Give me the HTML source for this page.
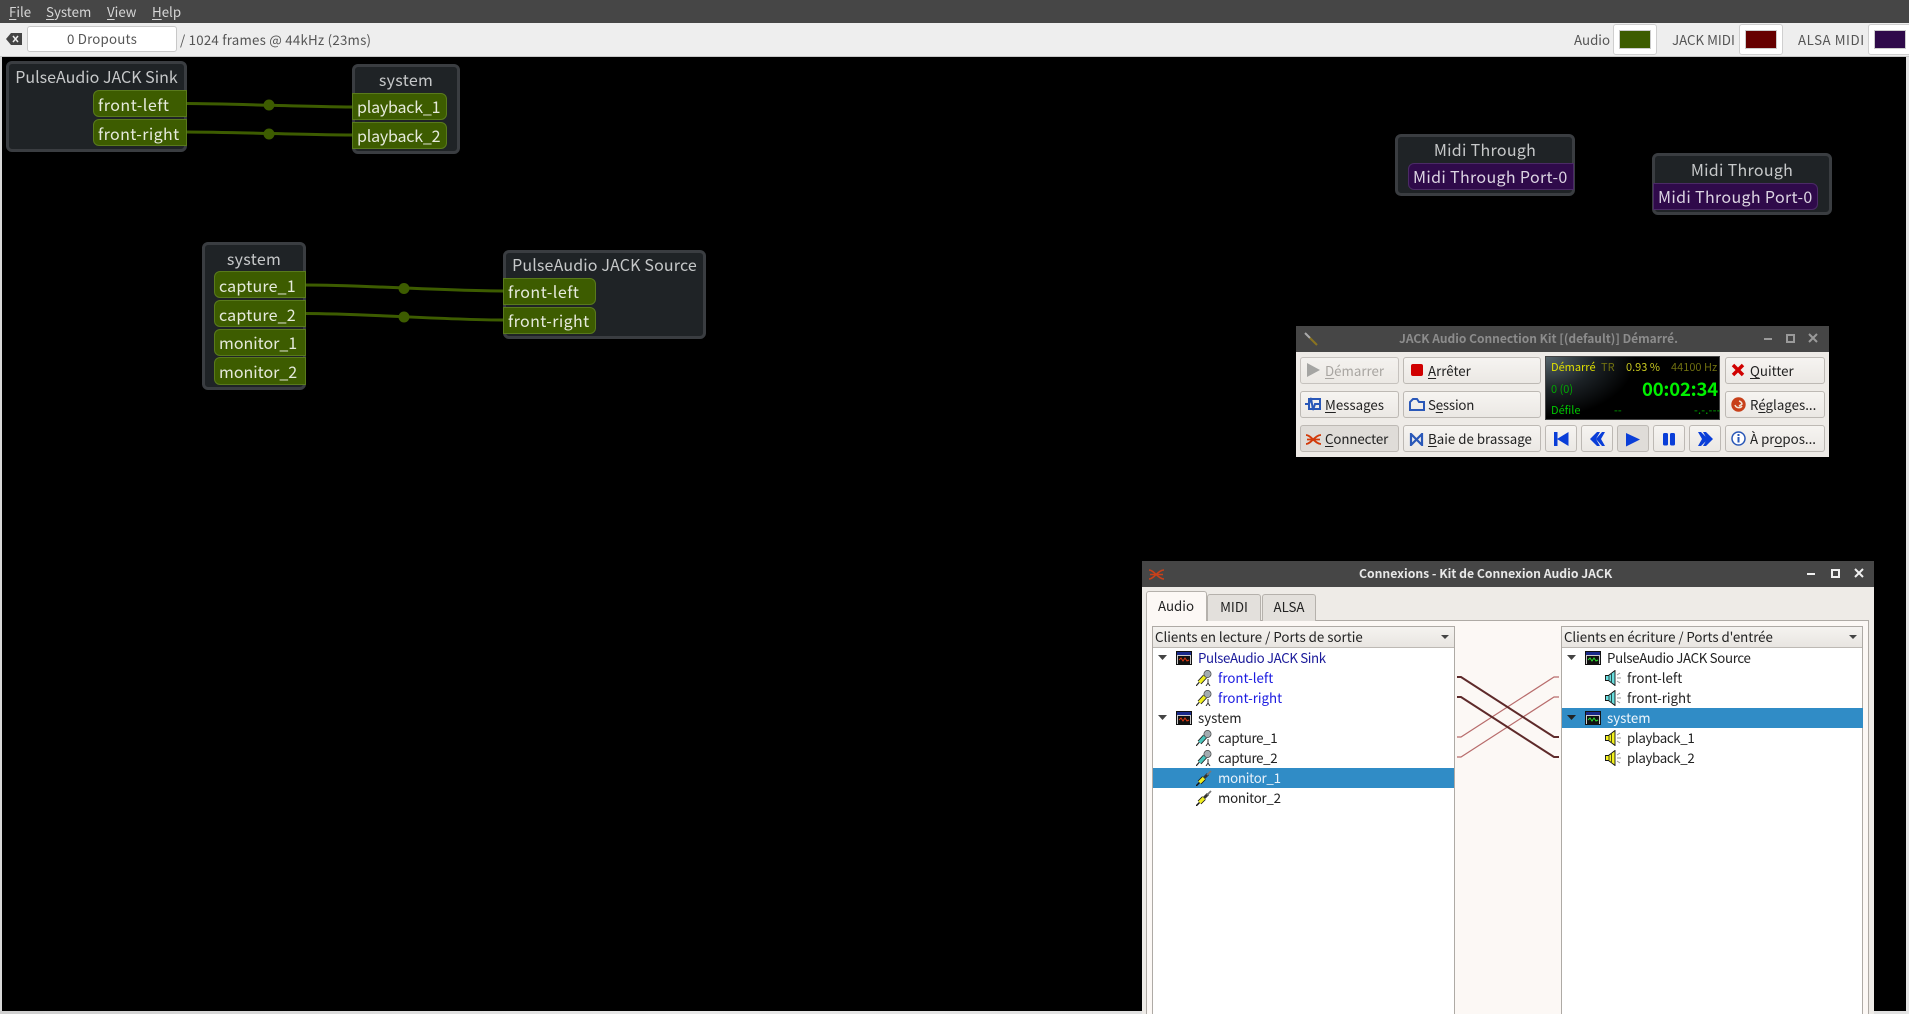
<!DOCTYPE html>
<html><head><meta charset="utf-8"><title>QJackCtl</title>
<style>
html,body{margin:0;padding:0;background:#000;width:1909px;height:1014px;overflow:hidden}
body{position:relative;font-family:"Noto Sans CJK JP","DejaVu Sans","Liberation Sans",sans-serif;font-size:13.3px;color:#222}
div,span.a,svg.a{position:absolute;box-sizing:border-box}
.t{position:absolute;white-space:pre;line-height:20px;height:20px}
.c{text-align:center}
u{text-decoration-thickness:1px;text-underline-offset:2px}
.node{background:#1f2326;border:3px solid #3a3d41;border-radius:6px}
.nt{position:absolute;white-space:pre;line-height:20px;height:20px;font-size:16px;color:#c6c8c9;text-align:center}
.port{background:#3d5c00;border:1px solid #597a1c;color:#e6eadc;font-size:16px;line-height:25px;white-space:pre;padding-left:4px}
.pl{border-radius:6px 0 0 6px}
.pr{border-radius:0 6px 6px 0}
.pp{background:#2f0a4a;border:1px solid #4b2a66;color:#dcd4e2;font-size:16px;line-height:25px;white-space:pre;padding-left:4px;letter-spacing:.35px}
.btn{background:linear-gradient(#f6f4f1,#ebe8e4);border:1px solid #bdb9b4;border-radius:3px}
.on{background:#dfdcd8}
.tb{background:#464646}
.sw{background:#fff;border:1px solid #cfcfcf;border-radius:3px}
.d{font-size:11px}
</style></head>
<body>
<svg width="0" height="0" style="position:absolute">
<defs>
<symbol id="gi" viewBox="0 0 16 14"><rect x=".5" y=".5" width="15" height="13" fill="#ccc" stroke="#111"/><rect x="1" y="1" width="14" height="3" fill="#1a2a8a"/><rect x="2" y="5" width="12" height="8" fill="#111"/><path d="M3 9l2-2 2 3 2-3 2 3 2-1" fill="none" stroke="#e03a10"/></symbol>
<symbol id="gg" viewBox="0 0 16 14"><rect x=".5" y=".5" width="15" height="13" fill="#ccc" stroke="#111"/><rect x="1" y="1" width="14" height="3" fill="#1a2a8a"/><rect x="2" y="5" width="12" height="8" fill="#111"/><path d="M3 9l2-2 2 3 2-3 2 3 2-1" fill="none" stroke="#2fe030"/></symbol>
<symbol id="my" viewBox="0 0 16 16"><path d="M0 16L3.500 12" stroke="#222" stroke-width="1.200"/><path d="M3.500 12.500L9 6.500" stroke="#222" stroke-width="5"/><path d="M3.500 12.500L9 6.500" stroke="#f0ee20" stroke-width="3.400"/><circle cx="11.500" cy="4" r="3.600" fill="#a2acb0" stroke="#444" stroke-width=".7"/><path d="M12 9v4m-2 3l2-3 2 3" stroke="#333" fill="none"/></symbol>
<symbol id="mc" viewBox="0 0 16 16"><path d="M0 16L3.500 12" stroke="#222" stroke-width="1.200"/><path d="M3.500 12.500L9 6.500" stroke="#222" stroke-width="5"/><path d="M3.500 12.500L9 6.500" stroke="#4ac4bc" stroke-width="3.400"/><circle cx="11.500" cy="4" r="3.600" fill="#a2acb0" stroke="#444" stroke-width=".7"/><path d="M12 9v4m-2 3l2-3 2 3" stroke="#333" fill="none"/></symbol>
<symbol id="jk" viewBox="0 0 16 16"><path d="M0 16l4-4" stroke="#111" stroke-width="1.500"/><path d="M3.500 12.500L8 8" stroke="#111" stroke-width="5"/><path d="M3.500 12.500L8 8" stroke="#f0ee20" stroke-width="3.400"/><path d="M8 8l4-4" stroke="#333" stroke-width="3"/><path d="M11 5l4-4" stroke="#777" stroke-width="1.800"/></symbol>
<symbol id="sc" viewBox="0 0 16 16"><path d="M.500 5.500h3L10 .500v15l-6.500-5h-3z" fill="#6adcdc" stroke="#111" stroke-width=".9"/><path d="M4 6v4M6.500 4v8" stroke="#111" stroke-width=".7"/><path d="M12 5l3-2m-3 5h4m-4 3l3 2" stroke="#999"/></symbol>
<symbol id="sy" viewBox="0 0 16 16"><path d="M.500 5.500h3L10 .500v15l-6.500-5h-3z" fill="#f2f020" stroke="#111" stroke-width=".9"/><path d="M4 6v4M6.500 4v8" stroke="#111" stroke-width=".7"/><path d="M12 5l3-2m-3 5h4m-4 3l3 2" stroke="#999"/></symbol>
</defs></svg>

<!-- left/bottom/right strips -->
<div style="left:0;top:0;width:2px;height:1014px;background:#d8d8d8"></div>
<div style="left:0;top:1011px;width:1142px;height:3px;background:linear-gradient(90deg,#cfcfcf,#e8e8e8 60%,#e0e0e0)"></div>
<div style="left:1874px;top:1011px;width:35px;height:3px;background:#e0e0e0"></div>
<div style="left:1906px;top:57px;width:3px;height:957px;background:#e4e4e4"></div>

<!-- menu bar -->
<div style="left:0;top:0;width:1909px;height:23px;background:#464646"></div>
<span class="t" style="left:9px;top:2px;color:#d6d6d6"><u>F</u>ile</span>
<span class="t" style="left:46px;top:2px;color:#d6d6d6"><u>S</u>ystem</span>
<span class="t" style="left:107px;top:2px;color:#d6d6d6"><u>V</u>iew</span>
<span class="t" style="left:152px;top:2px;color:#d6d6d6"><u>H</u>elp</span>

<!-- toolbar -->
<div style="left:0;top:23px;width:1909px;height:34px;background:#eeeeee;border-bottom:1px solid #c8c8c8"></div>
<svg class="a" style="left:6px;top:33px" width="16" height="12" viewBox="0 0 16 12"><path d="M0 6L5 0h11v12H5z" fill="#444"/><path d="M7 3l5 6m0-6l-5 6" stroke="#eee" stroke-width="1.500"/></svg>
<div style="left:27px;top:26px;width:150px;height:26px;background:#fff;border:1px solid #c8c8c8;border-radius:3px"></div>
<span class="t c" style="left:27px;width:150px;top:29px;color:#555;letter-spacing:.2px">0 Dropouts</span>
<span class="t" style="left:180px;top:30px;color:#555;letter-spacing:.22px">/ 1024 frames @ 44kHz (23ms)</span>
<span class="t" style="left:1574px;top:30px;color:#555">Audio</span>
<div class="sw" style="left:1613px;top:24px;width:44px;height:31px"></div>
<div style="left:1619px;top:30px;width:32px;height:19px;background:#3d5c00;border:1px solid #ccc"></div>
<span class="t" style="left:1672px;top:30px;color:#555">JACK MIDI</span>
<div class="sw" style="left:1739px;top:24px;width:44px;height:31px"></div>
<div style="left:1745px;top:30px;width:32px;height:19px;background:#660000;border:1px solid #ccc"></div>
<span class="t" style="left:1798px;top:30px;color:#555;letter-spacing:.55px">ALSA MIDI</span>
<div class="sw" style="left:1868px;top:24px;width:44px;height:31px"></div>
<div style="left:1874px;top:30px;width:32px;height:19px;background:#2f0a4a;border:1px solid #ccc"></div>

<!-- canvas wires -->
<svg class="a" style="left:0;top:0" width="1909" height="1014" fill="none">
<g stroke="#3d5c00" stroke-width="3">
<path d="M186 103.500C230 103.500 310 107 352 107"/><path d="M186 132C230 132 310 135 352 135"/>
<path d="M304 285C365 285 445 291 503 291"/><path d="M304 313.500C365 313.500 445 320 503 320"/>
</g>
<g fill="#3d5c00"><circle cx="269" cy="105" r="5.500"/><circle cx="269" cy="134" r="5.500"/><circle cx="404" cy="288.500" r="5.500"/><circle cx="404" cy="317" r="5.500"/></g>
</svg>

<!-- Sink -->
<div class="node" style="left:6px;top:61px;width:181px;height:91px"></div>
<span class="nt" style="left:6px;width:181px;top:66px">PulseAudio JACK Sink</span>
<div class="port pl" style="left:93px;top:90px;width:94px;height:27px;line-height:27px;letter-spacing:.5px">front-left</div>
<div class="port pl" style="left:93px;top:119px;width:94px;height:27px;line-height:27px;letter-spacing:.4px">front-right</div>
<!-- system playback -->
<div class="node" style="left:352px;top:64px;width:108px;height:90px"></div>
<span class="nt" style="left:352px;width:108px;top:69px;letter-spacing:.3px">system</span>
<div class="port pr" style="left:352px;top:93px;width:95px;height:27px;letter-spacing:-.2px">playback_1</div>
<div class="port pr" style="left:352px;top:122px;width:95px;height:27px;letter-spacing:-.2px">playback_2</div>
<!-- system capture -->
<div class="node" style="left:202px;top:242px;width:104px;height:148px"></div>
<span class="nt" style="left:202px;width:104px;top:248px;letter-spacing:.3px">system</span>
<div class="port pl" style="left:214px;top:271px;width:92px;height:27px;line-height:27px;letter-spacing:.2px">capture_1</div>
<div class="port pl" style="left:214px;top:300px;width:92px;height:27px;line-height:27px;letter-spacing:.2px">capture_2</div>
<div class="port pl" style="left:214px;top:329px;width:92px;height:27px">monitor_1</div>
<div class="port pl" style="left:214px;top:357px;width:92px;height:28px;line-height:27px">monitor_2</div>
<!-- Source -->
<div class="node" style="left:503px;top:250px;width:203px;height:89px"></div>
<span class="nt" style="left:503px;width:203px;top:254px;letter-spacing:.15px">PulseAudio JACK Source</span>
<div class="port pr" style="left:503px;top:278px;width:93px;height:27px;letter-spacing:.5px">front-left</div>
<div class="port pr" style="left:503px;top:307px;width:93px;height:27px;letter-spacing:.4px">front-right</div>
<!-- Midi -->
<div class="node" style="left:1395px;top:134px;width:180px;height:62px"></div>
<span class="nt" style="left:1395px;width:180px;top:139px;letter-spacing:.3px">Midi Through</span>
<div class="pp pl" style="left:1408px;top:163px;width:166px;height:27px">Midi Through Port-0</div>
<div class="node" style="left:1652px;top:153px;width:180px;height:62px"></div>
<span class="nt" style="left:1652px;width:180px;top:159px;letter-spacing:.3px">Midi Through</span>
<div class="pp pr" style="left:1653px;top:183px;width:165px;height:27px">Midi Through Port-0</div>

<!-- JACK window -->
<div style="left:1296px;top:326px;width:533px;height:131px;background:#eeebe7"></div>
<div class="tb" style="left:1296px;top:326px;width:533px;height:26px"></div>
<svg class="a" style="left:1303px;top:331px" width="16" height="16"><path d="M2 2l5 5" stroke="#aaa" stroke-width="2"/><path d="M7 7l7 7" stroke="#8a7420" stroke-width="2"/></svg>
<span class="t" style="left:1399px;top:329px;color:#8c8c8c;font-weight:bold;font-size:12px">JACK Audio Connection Kit [(default)] Démarré.</span>
<svg class="a" style="left:1760px;top:331px" width="60" height="16" fill="none" stroke="#9a9a9a" stroke-width="2"><path d="M4 8h8"/><rect x="27" y="4" width="7" height="7"/><path d="M49 3l8 8m0-8l-8 8"/></svg>

<div class="btn" style="left:1300px;top:357px;width:99px;height:27px;opacity:.8"></div>
<svg class="a" style="left:1306px;top:362px" width="16" height="16"><path d="M1 1l13 7L1 15z" fill="#a5a5a3"/></svg>
<span class="t" style="left:1325px;top:361px;color:#a8a5a1"><u>D</u>émarrer</span>
<div class="btn" style="left:1403px;top:357px;width:138px;height:27px"></div>
<svg class="a" style="left:1410px;top:363px" width="14" height="14"><rect x="1" y="1" width="12" height="12" rx="2" fill="#d00000"/></svg>
<span class="t" style="left:1428px;top:361px"><u>A</u>rrêter</span>

<div class="btn" style="left:1300px;top:391px;width:99px;height:27px"></div>
<svg class="a" style="left:1305px;top:396px" width="16" height="16" fill="none" stroke="#2a58b8" stroke-width="2"><rect x="4" y="3" width="11" height="10"/><path d="M0 8h4l2-6 2 12 2-6h5"/></svg>
<span class="t" style="left:1325px;top:395px"><u>M</u>essages</span>
<div class="btn" style="left:1403px;top:391px;width:138px;height:27px"></div>
<svg class="a" style="left:1409px;top:397px" width="16" height="15" fill="none" stroke="#2a58b8" stroke-width="2"><path d="M1 13V5l3-3h4l2 3h5v8z"/></svg>
<span class="t" style="left:1428px;top:395px;letter-spacing:-.2px">S<u>e</u>ssion</span>

<div class="btn on" style="left:1300px;top:425px;width:99px;height:27px"></div>
<svg class="a" style="left:1306px;top:434px" width="15" height="11" fill="none" stroke="#d23a0a" stroke-width="1.800"><path d="M0 1c5 0 9 9 15 9M0 10c5 0 9-9 15-9M1 5.500h13"/></svg>
<span class="t" style="left:1325px;top:429px;letter-spacing:-.1px"><u>C</u>onnecter</span>
<div class="btn" style="left:1403px;top:425px;width:138px;height:27px"></div>
<svg class="a" style="left:1409px;top:433px" width="15" height="13" fill="none" stroke="#2a58b8" stroke-width="2.200"><path d="M2 1v11l11-11v11z"/></svg>
<span class="t" style="left:1428px;top:429px"><u>B</u>aie de brassage</span>

<!-- display -->
<div style="left:1545px;top:356px;width:175px;height:64px;background:radial-gradient(ellipse 90px 60px at 0 0,#55646a,#1c2226 55%,#000 100%);border:1px solid #444"></div>
<span class="t d" style="left:1551px;top:357px;color:#e0e000">Démarré</span>
<span class="t d" style="left:1601px;top:357px;color:#6f6f10">TR</span>
<span class="t d" style="left:1626px;top:357px;color:#c8c820">0.93 %</span>
<span class="t d" style="left:1671px;top:357px;color:#6f6f10">44100 Hz</span>
<span class="t d" style="left:1551px;top:379px;color:#00a800">0 (0)</span>
<span class="t" style="left:1642px;top:379px;color:#00f000;font-size:18.500px;font-weight:bold;letter-spacing:-.2px">00:02:34</span>
<span class="t d" style="left:1551px;top:400px;color:#00c800">Défile</span>
<span class="t d" style="left:1614px;top:400px;color:#00a800">--</span>
<span class="t d" style="left:1694px;top:400px;color:#00b000;letter-spacing:.2px">-.-.---</span>

<!-- transport -->
<div class="btn" style="left:1545px;top:425px;width:32px;height:27px"></div>
<svg class="a" style="left:1554px;top:432px" width="15" height="15" fill="#0a3ed8"><rect x="0" y="0" width="3.500" height="14"/><path d="M14.500 0v14L3 7z"/></svg>
<div class="btn" style="left:1581px;top:425px;width:32px;height:27px"></div>
<svg class="a" style="left:1590px;top:432px" width="15" height="15" fill="#0a3ed8"><path d="M7 0h3L6 7l4 7H7L0 7zM12 0h3l-4 7 4 7h-3L6 7z"/></svg>
<div class="btn on" style="left:1617px;top:425px;width:32px;height:27px"></div>
<svg class="a" style="left:1626px;top:433px" width="14" height="14" fill="#0a3ed8"><path d="M0 0l14 6.500L0 13.500z"/></svg>
<div class="btn" style="left:1653px;top:425px;width:32px;height:27px"></div>
<svg class="a" style="left:1663px;top:433px" width="13" height="13" fill="#0a3ed8"><rect x="0" y="0" width="5" height="12.500" rx="1.500"/><rect x="7" y="0" width="5" height="12.500" rx="1.500"/></svg>
<div class="btn" style="left:1689px;top:425px;width:32px;height:27px"></div>
<svg class="a" style="left:1698px;top:432px" width="15" height="15" fill="#0a3ed8"><path d="M0 0h3l7 7-7 7H0l4-7zM5 0h3l7 7-7 7H5l4-7z"/></svg>

<!-- right buttons -->
<div class="btn" style="left:1725px;top:357px;width:100px;height:27px"></div>
<svg class="a" style="left:1731px;top:363px" width="14" height="14"><path d="M2 2l10 10m0-10L2 12" stroke="#d00000" stroke-width="3.500"/></svg>
<span class="t" style="left:1750px;top:361px"><u>Q</u>uitter</span>
<div class="btn" style="left:1725px;top:391px;width:100px;height:27px"></div>
<svg class="a" style="left:1731px;top:397px" width="15" height="15"><circle cx="7.500" cy="7.500" r="7.200" fill="#c8401a"/><path d="M4 8a4 4 0 0 0 7 1M8 4a4 4 0 0 1 3 3L8 9" fill="none" stroke="#f2e6d8" stroke-width="1.500"/></svg>
<span class="t" style="left:1750px;top:395px">R<u>é</u>glages...</span>
<div class="btn" style="left:1725px;top:425px;width:100px;height:27px"></div>
<svg class="a" style="left:1731px;top:431px" width="15" height="15"><circle cx="7.500" cy="7.500" r="6.500" fill="#fff" stroke="#2a58b8" stroke-width="1.500"/><rect x="6.500" y="6" width="2" height="5.500" fill="#2a58b8"/><rect x="6.500" y="3" width="2" height="2" fill="#2a58b8"/></svg>
<span class="t" style="left:1750px;top:429px">À pr<u>o</u>pos...</span>

<!-- Connections window -->
<div style="left:1142px;top:561px;width:732px;height:453px;background:#eeebe7"></div>
<div class="tb" style="left:1142px;top:561px;width:732px;height:26px"></div>
<svg class="a" style="left:1149px;top:569px" width="15" height="11" fill="none" stroke="#c8401a" stroke-width="1.500"><path d="M0 1c5 0 9 9 15 9M0 10c5 0 9-9 15-9M1 5.500h13"/></svg>
<span class="t" style="left:1359px;top:563px;color:#e8e8e8;font-weight:bold;font-size:12.200px">Connexions - Kit de Connexion Audio JACK</span>
<svg class="a" style="left:1804px;top:566px" width="64" height="16" fill="none" stroke="#efefef" stroke-width="2"><path d="M3 8h8"/><rect x="28" y="4" width="7" height="7"/><path d="M51 3l8 8m0-8l-8 8"/></svg>

<!-- tabs -->
<div style="left:1146px;top:620px;width:723px;height:394px;background:#fcf8f5;border:1px solid #aeaaa5;border-bottom:none"></div>
<div style="left:1207px;top:594px;width:54px;height:27px;background:#e3e0dc;border:1px solid #b5b1ac;border-bottom:none;border-radius:3px 3px 0 0"></div>
<div style="left:1262px;top:594px;width:54px;height:27px;background:#e3e0dc;border:1px solid #b5b1ac;border-bottom:none;border-radius:3px 3px 0 0"></div>
<div style="left:1146px;top:591px;width:61px;height:30px;background:#fcf8f5;border:1px solid #b5b1ac;border-bottom:none;border-radius:3px 3px 0 0"></div>
<span class="t c" style="left:1146px;width:60px;top:596px">Audio</span>
<span class="t c" style="left:1207px;width:54px;top:597px">MIDI</span>
<span class="t c" style="left:1262px;width:54px;top:597px">ALSA</span>

<!-- left list -->
<div style="left:1152px;top:626px;width:303px;height:388px;background:#fff;border:1px solid #aeaaa5;border-bottom:none"></div>
<div style="left:1153px;top:627px;width:301px;height:21px;background:linear-gradient(#f5f3f0,#e8e5e1);border-bottom:1px solid #bdb9b4"></div>
<span class="t" style="left:1155px;top:627px">Clients en lecture / Ports de sortie</span>
<svg class="a" style="left:1440px;top:634px" width="12" height="8"><path d="M1 1h8L5 5z" fill="#444"/></svg>
<div style="left:1153px;top:768px;width:301px;height:20px;background:#308cc6"></div>
<svg class="a" style="left:1157px;top:654px" width="12" height="8"><path d="M1 1h9L5.500 6z" fill="#444"/></svg>
<svg class="a" style="left:1157px;top:714px" width="12" height="8"><path d="M1 1h9L5.500 6z" fill="#444"/></svg>
<svg class="a" style="left:1176px;top:651px" width="16" height="14"><use href="#gi"/></svg>
<svg class="a" style="left:1176px;top:711px" width="16" height="14"><use href="#gi"/></svg>
<svg class="a" style="left:1196px;top:670px" width="16" height="16"><use href="#my"/></svg>
<svg class="a" style="left:1196px;top:690px" width="16" height="16"><use href="#my"/></svg>
<svg class="a" style="left:1196px;top:730px" width="16" height="16"><use href="#mc"/></svg>
<svg class="a" style="left:1196px;top:750px" width="16" height="16"><use href="#mc"/></svg>
<svg class="a" style="left:1196px;top:770px" width="16" height="16"><use href="#jk"/></svg>
<svg class="a" style="left:1196px;top:790px" width="16" height="16"><use href="#jk"/></svg>
<span class="t" style="left:1198px;top:648px;color:#1a1a9a;letter-spacing:-.36px">PulseAudio JACK Sink</span>
<span class="t" style="left:1218px;top:668px;color:#1a1ae0">front-left</span>
<span class="t" style="left:1218px;top:688px;color:#1a1ae0">front-right</span>
<span class="t" style="left:1198px;top:708px">system</span>
<span class="t" style="left:1218px;top:728px;letter-spacing:-.35px">capture_1</span>
<span class="t" style="left:1218px;top:748px;letter-spacing:-.35px">capture_2</span>
<span class="t" style="left:1218px;top:768px;color:#e8f2fa;letter-spacing:-.25px">monitor_1</span>
<span class="t" style="left:1218px;top:788px;letter-spacing:-.25px">monitor_2</span>

<!-- right list -->
<div style="left:1561px;top:626px;width:302px;height:388px;background:#fff;border:1px solid #aeaaa5;border-bottom:none"></div>
<div style="left:1562px;top:627px;width:300px;height:21px;background:linear-gradient(#f5f3f0,#e8e5e1);border-bottom:1px solid #bdb9b4"></div>
<span class="t" style="left:1564px;top:627px;letter-spacing:-.05px">Clients en écriture / Ports d'entrée</span>
<svg class="a" style="left:1848px;top:634px" width="12" height="8"><path d="M1 1h8L5 5z" fill="#444"/></svg>
<div style="left:1562px;top:708px;width:301px;height:20px;background:#308cc6"></div>
<svg class="a" style="left:1566px;top:654px" width="12" height="8"><path d="M1 1h9L5.500 6z" fill="#444"/></svg>
<svg class="a" style="left:1566px;top:714px" width="12" height="8"><path d="M1 1h9L5.500 6z" fill="#222"/></svg>
<svg class="a" style="left:1585px;top:651px" width="16" height="14"><use href="#gg"/></svg>
<svg class="a" style="left:1585px;top:711px" width="16" height="14"><use href="#gg"/></svg>
<svg class="a" style="left:1605px;top:670px" width="16" height="16"><use href="#sc"/></svg>
<svg class="a" style="left:1605px;top:690px" width="16" height="16"><use href="#sc"/></svg>
<svg class="a" style="left:1605px;top:730px" width="16" height="16"><use href="#sy"/></svg>
<svg class="a" style="left:1605px;top:750px" width="16" height="16"><use href="#sy"/></svg>
<span class="t" style="left:1607px;top:648px;letter-spacing:-.33px">PulseAudio JACK Source</span>
<span class="t" style="left:1627px;top:668px">front-left</span>
<span class="t" style="left:1627px;top:688px">front-right</span>
<span class="t" style="left:1607px;top:708px;color:#eef6fc">system</span>
<span class="t" style="left:1627px;top:728px;letter-spacing:-.35px">playback_1</span>
<span class="t" style="left:1627px;top:748px;letter-spacing:-.35px">playback_2</span>

<!-- splitter lines -->
<svg class="a" style="left:1455px;top:660px" width="107" height="110" fill="none">
<g stroke="#b86c6c" stroke-width="1.200"><path d="M2 77h4L99 17h5"/><path d="M2 97h4L99 37h5"/></g>
<g stroke="#5e2a2a" stroke-width="2"><path d="M2 17h4L99 77h5"/><path d="M2 37h4L99 97h5"/></g>
</svg>
</body></html>
